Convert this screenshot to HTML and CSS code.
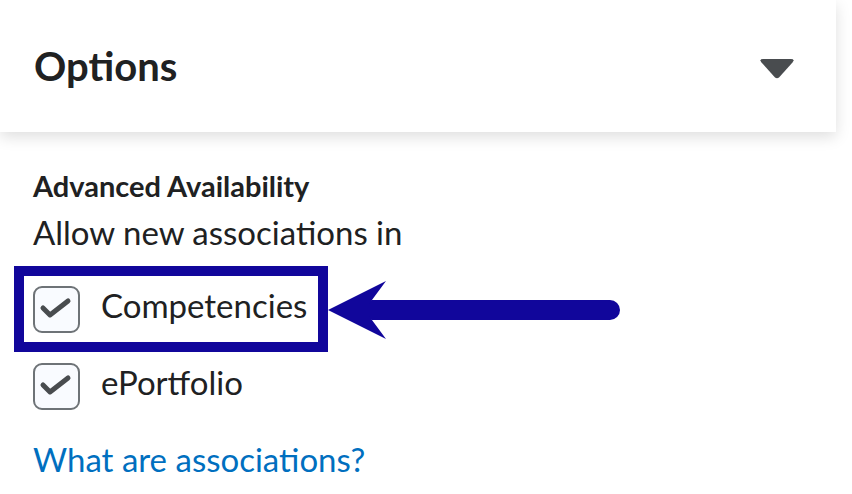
FILE: index.html
```html
<!DOCTYPE html>
<html lang="en">
<head>
    <title>Options</title>
    <link rel="stylesheet" href="styles.css">
</head>
<body>
    <div class="panel-header">
        <h1>Options</h1>
        <svg class="caret" width="36" height="21" viewBox="0 0 36 21">
            <path d="M4 1 H32 Q36 1 33.5 4.5 L20 19.5 Q18 21 16 19.5 L2.5 4.5 Q0 1 4 1 Z" fill="#494c4f"/>
        </svg>
    </div>

    <div class="panel-body">
        <h2>Advanced Availability</h2>
        <p class="intro">Allow new associations in</p>

        <div class="options">
            <label class="option">
                <span class="checkbox">
                    <svg width="47" height="47" viewBox="0 0 47 47">
                        <path d="M10 22 L17 29 L35 15" fill="none" stroke="#494c4f" stroke-width="5" stroke-linecap="round" stroke-linejoin="round"/>
                    </svg>
                </span>
                <span class="option-text">Competencies</span>
            </label>
            <label class="option">
                <span class="checkbox">
                    <svg width="47" height="47" viewBox="0 0 47 47">
                        <path d="M10 22 L17 29 L35 15" fill="none" stroke="#494c4f" stroke-width="5" stroke-linecap="round" stroke-linejoin="round"/>
                    </svg>
                </span>
                <span class="option-text">ePortfolio</span>
            </label>
        </div>

        <a class="help-link" href="#">What are associations?</a>

        <!-- annotation drawn over the page -->
        <svg class="callout" width="852" height="494" viewBox="0 0 852 494">
            <rect x="19" y="271" width="304" height="76" fill="none" stroke="#11069b" stroke-width="10"/>
            <line x1="372" y1="310" x2="610" y2="310" stroke="#11069b" stroke-width="20" stroke-linecap="round"/>
            <path d="M328 310 L386 281 L369 304 L369 316 L386 339 Z" fill="#11069b"/>
        </svg>
    </div>
</body>
</html>
```

FILE: styles.css
```css
body {
    margin: 0;
    font-family: Lato, "Open Sans", sans-serif;
    background-color: white;
    color: #202122;
    width: 852px;
    height: 494px;
    overflow: hidden;
    position: relative;
}

.panel-header {
    width: 836px;
    height: 132px;
    box-sizing: border-box;
    padding: 0 41px 0 34px;
    display: flex;
    align-items: center;
    justify-content: space-between;
    background-color: white;
    box-shadow: 0 5px 14px rgba(0, 0, 0, 0.13);
}

h1 {
    margin: 0;
    font-size: 40px;
    line-height: 48px;
    font-weight: 700;
    color: #202122;
}

.caret {
    display: block;
    margin-top: 4px;
}

.panel-body {
    padding: 36px 0 0 33px;
}

h2 {
    margin: 0;
    font-size: 29px;
    font-weight: 700;
    line-height: 36px;
}

.intro {
    margin: 8px 0 0;
    font-size: 33px;
    line-height: 40px;
}

.options {
    margin-top: 34px;
    display: flex;
    flex-direction: column;
    gap: 30px;
}

.option {
    display: flex;
    align-items: flex-start;
    gap: 21px;
    font-size: 33px;
}

.option-text {
    line-height: 39px;
}

.checkbox {
    flex: none;
    width: 47px;
    height: 47px;
    box-sizing: border-box;
    border: 2px solid #6e7377;
    border-radius: 9px;
    background-color: #f9fbff;
    position: relative;
}

.checkbox svg {
    display: block;
    position: absolute;
    left: -2px;
    top: -2px;
}

.help-link {
    display: block;
    margin-top: 29px;
    font-size: 33px;
    line-height: 40px;
    color: #006fbf;
    text-decoration: none;
}

.callout {
    position: absolute;
    left: 0;
    top: 0;
    pointer-events: none;
}
```
